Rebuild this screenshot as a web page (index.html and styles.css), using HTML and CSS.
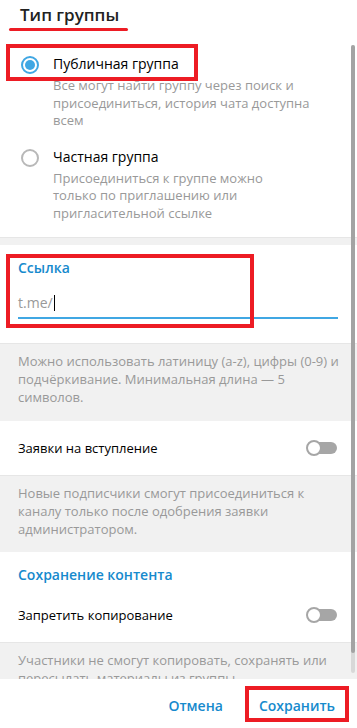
FILE: index.html
```html
<!DOCTYPE html>
<html lang="ru">
<head>
<meta charset="utf-8">
<title>Тип группы</title>
<link rel="stylesheet" href="styles.css">
</head>
<body>
<div class="dialog">
  <header class="dialog-head">
    <h1 class="title">Тип группы</h1>
  </header>

  <div class="scroll">
    <div class="scroll-content">
      <section class="panel options">
        <div class="option">
          <svg class="radio" viewBox="0 0 18 18" width="18" height="18">
            <circle cx="9" cy="9" r="8" fill="none" stroke="#40a7e3" stroke-width="2"/>
            <circle cx="9" cy="9" r="5" fill="#40a7e3"/>
          </svg>
          <div class="option-text">
            <div class="option-label">Публичная группа</div>
            <div class="option-desc">Все могут найти группу через поиск и<br>присоединиться, история чата доступна<br>всем</div>
          </div>
        </div>
        <div class="option option-next">
          <svg class="radio" viewBox="0 0 18 18" width="18" height="18">
            <circle cx="9" cy="9" r="8" fill="none" stroke="#b8b8b8" stroke-width="2"/>
          </svg>
          <div class="option-text">
            <div class="option-label">Частная группа</div>
            <div class="option-desc">Присоединиться к группе можно<br>только по приглашению или<br>пригласительной ссылке</div>
          </div>
        </div>
      </section>

      <div class="divider"></div>

      <section class="panel link">
        <div class="section-title">Ссылка</div>
        <div class="field"><span class="field-value">t.me/</span><span class="caret"></span></div>
      </section>

      <div class="note">Можно использовать латиницу (a-z), цифры (0-9) и подчёркивание. Минимальная длина — 5 символов.</div>

      <div class="panel row">
        <span class="row-label">Заявки на вступление</span>
        <svg class="toggle" viewBox="0 0 31 16" width="31" height="16">
          <rect x="1" y="2" width="30" height="12" rx="6" fill="#a6a6a6"/>
          <circle cx="8" cy="8" r="7" fill="#fff" stroke="#a6a6a6" stroke-width="2"/>
        </svg>
      </div>

      <div class="note note-tight">Новые подписчики смогут присоединиться к каналу только после одобрения заявки администратором.</div>

      <section class="panel content">
        <div class="section-title">Сохранение контента</div>
        <div class="row row-inner">
          <span class="row-label">Запретить копирование</span>
          <svg class="toggle" viewBox="0 0 31 16" width="31" height="16">
            <rect x="1" y="2" width="30" height="12" rx="6" fill="#a6a6a6"/>
            <circle cx="8" cy="8" r="7" fill="#fff" stroke="#a6a6a6" stroke-width="2"/>
          </svg>
        </div>
      </section>

      <div class="note">Участники не смогут копировать, сохранять или пересылать материалы из группы.</div>
    </div>

    <div class="scrollbar"><div class="thumb"></div></div>
  </div>

  <footer class="dialog-foot">
    <button class="btn">Отмена</button>
    <button class="btn">Сохранить</button>
  </footer>

  <div class="mark mark-underline"></div>
  <div class="mark mark-box mark-public"></div>
  <div class="mark mark-box mark-link"></div>
  <div class="mark mark-box mark-save"></div>
</div>
</body>
</html>
```

FILE: styles.css
```css
* { box-sizing: border-box; }

html, body {
  margin: 0;
  padding: 0;
  background: #fff;
}

body {
  font-family: "Open Sans", "Noto Sans", "Liberation Sans", sans-serif;
  color: #000;
}

.dialog {
  position: relative;
  width: 357px;
  height: 728px;
  overflow: hidden;
  display: flex;
  flex-direction: column;
  background: #fff;
}

.dialog-head {
  height: 42px;
  flex: none;
}

.title {
  margin: 0;
  padding: 3px 0 0 20px;
  font-size: 17px;
  line-height: 24px;
  font-weight: 600;
  color: #222;
}

.scroll {
  position: relative;
  height: 637px;
  flex: none;
  overflow: hidden;
}

.scroll-content {
  display: flex;
  flex-direction: column;
}

.panel { background: #fff; }

.options { padding: 12px 0 15px 0; }

.option {
  display: flex;
  align-items: flex-start;
}

.option-next { margin-top: 17px; }

.radio {
  flex: none;
  margin: 2px 14px 0 21px;
}

.option-label {
  font-size: 14px;
  line-height: 20px;
  color: #000;
}

.option-desc {
  margin-top: 3px;
  font-size: 13px;
  line-height: 17.5px;
  color: #999;
}

.divider {
  height: 8px;
  background: #f1f1f1;
  box-shadow: inset 0 1px 0 #e6e6e6;
}

.link { padding: 13px 19px 24px 18px; }

.section-title {
  font-size: 14px;
  line-height: 20px;
  font-weight: 600;
  color: #168acd;
}

.field {
  margin-top: 15px;
  padding-bottom: 4px;
  border-bottom: 2px solid #40a7e3;
  font-size: 14px;
  line-height: 20px;
  display: flex;
  align-items: center;
}

.field-value { color: #999; }

.caret {
  width: 1px;
  height: 16px;
  background: #000;
  margin-left: 1px;
}

.note {
  background: #f1f1f1;
  padding: 9px 18px 15px 18px;
  font-size: 13px;
  line-height: 18px;
  color: #999;
  box-shadow: inset 0 1px 0 #e6e6e6;
}

.note-tight { padding-bottom: 14px; }

.row {
  display: flex;
  align-items: center;
  justify-content: space-between;
  padding: 18px 20px 18px 18px;
  font-size: 13px;
  line-height: 18px;
}

.row-label { color: #000; }

.toggle { flex: none; }

.content { padding-top: 13px; padding-left: 18px; }

.content .section-title { padding-right: 20px; }

.row-inner {
  padding: 21px 20px 18px 0;
}

.scrollbar {
  position: absolute;
  top: 3px;
  bottom: 6px;
  right: 2px;
  width: 4px;
  border-radius: 2px;
  background: rgba(0, 0, 0, 0.1);
}

.thumb {
  height: 608px;
  border-radius: 2px;
  background: #a3a3a3;
}

.dialog-foot {
  flex: 1;
  display: flex;
  justify-content: flex-end;
  align-items: flex-start;
  gap: 36px;
  padding: 17px 22px 0 0;
  background: #fff;
}

.btn {
  background: none;
  border: 0;
  padding: 0;
  margin: 0;
  font-family: inherit;
  font-size: 14px;
  line-height: 20px;
  font-weight: 600;
  color: #168acd;
}

.mark {
  position: absolute;
  pointer-events: none;
}

.mark-underline {
  left: 9px;
  top: 28px;
  width: 119px;
  height: 3px;
  border-radius: 2px;
  background: #ed1c24;
}

.mark-box { border: 4px solid #ed1c24; }

.mark-public {
  left: 6px;
  top: 44px;
  width: 192px;
  height: 37px;
}

.mark-link {
  left: 6px;
  top: 254px;
  width: 248px;
  height: 74px;
}

.mark-save {
  left: 245px;
  top: 686px;
  width: 104px;
  height: 36px;
}
```
